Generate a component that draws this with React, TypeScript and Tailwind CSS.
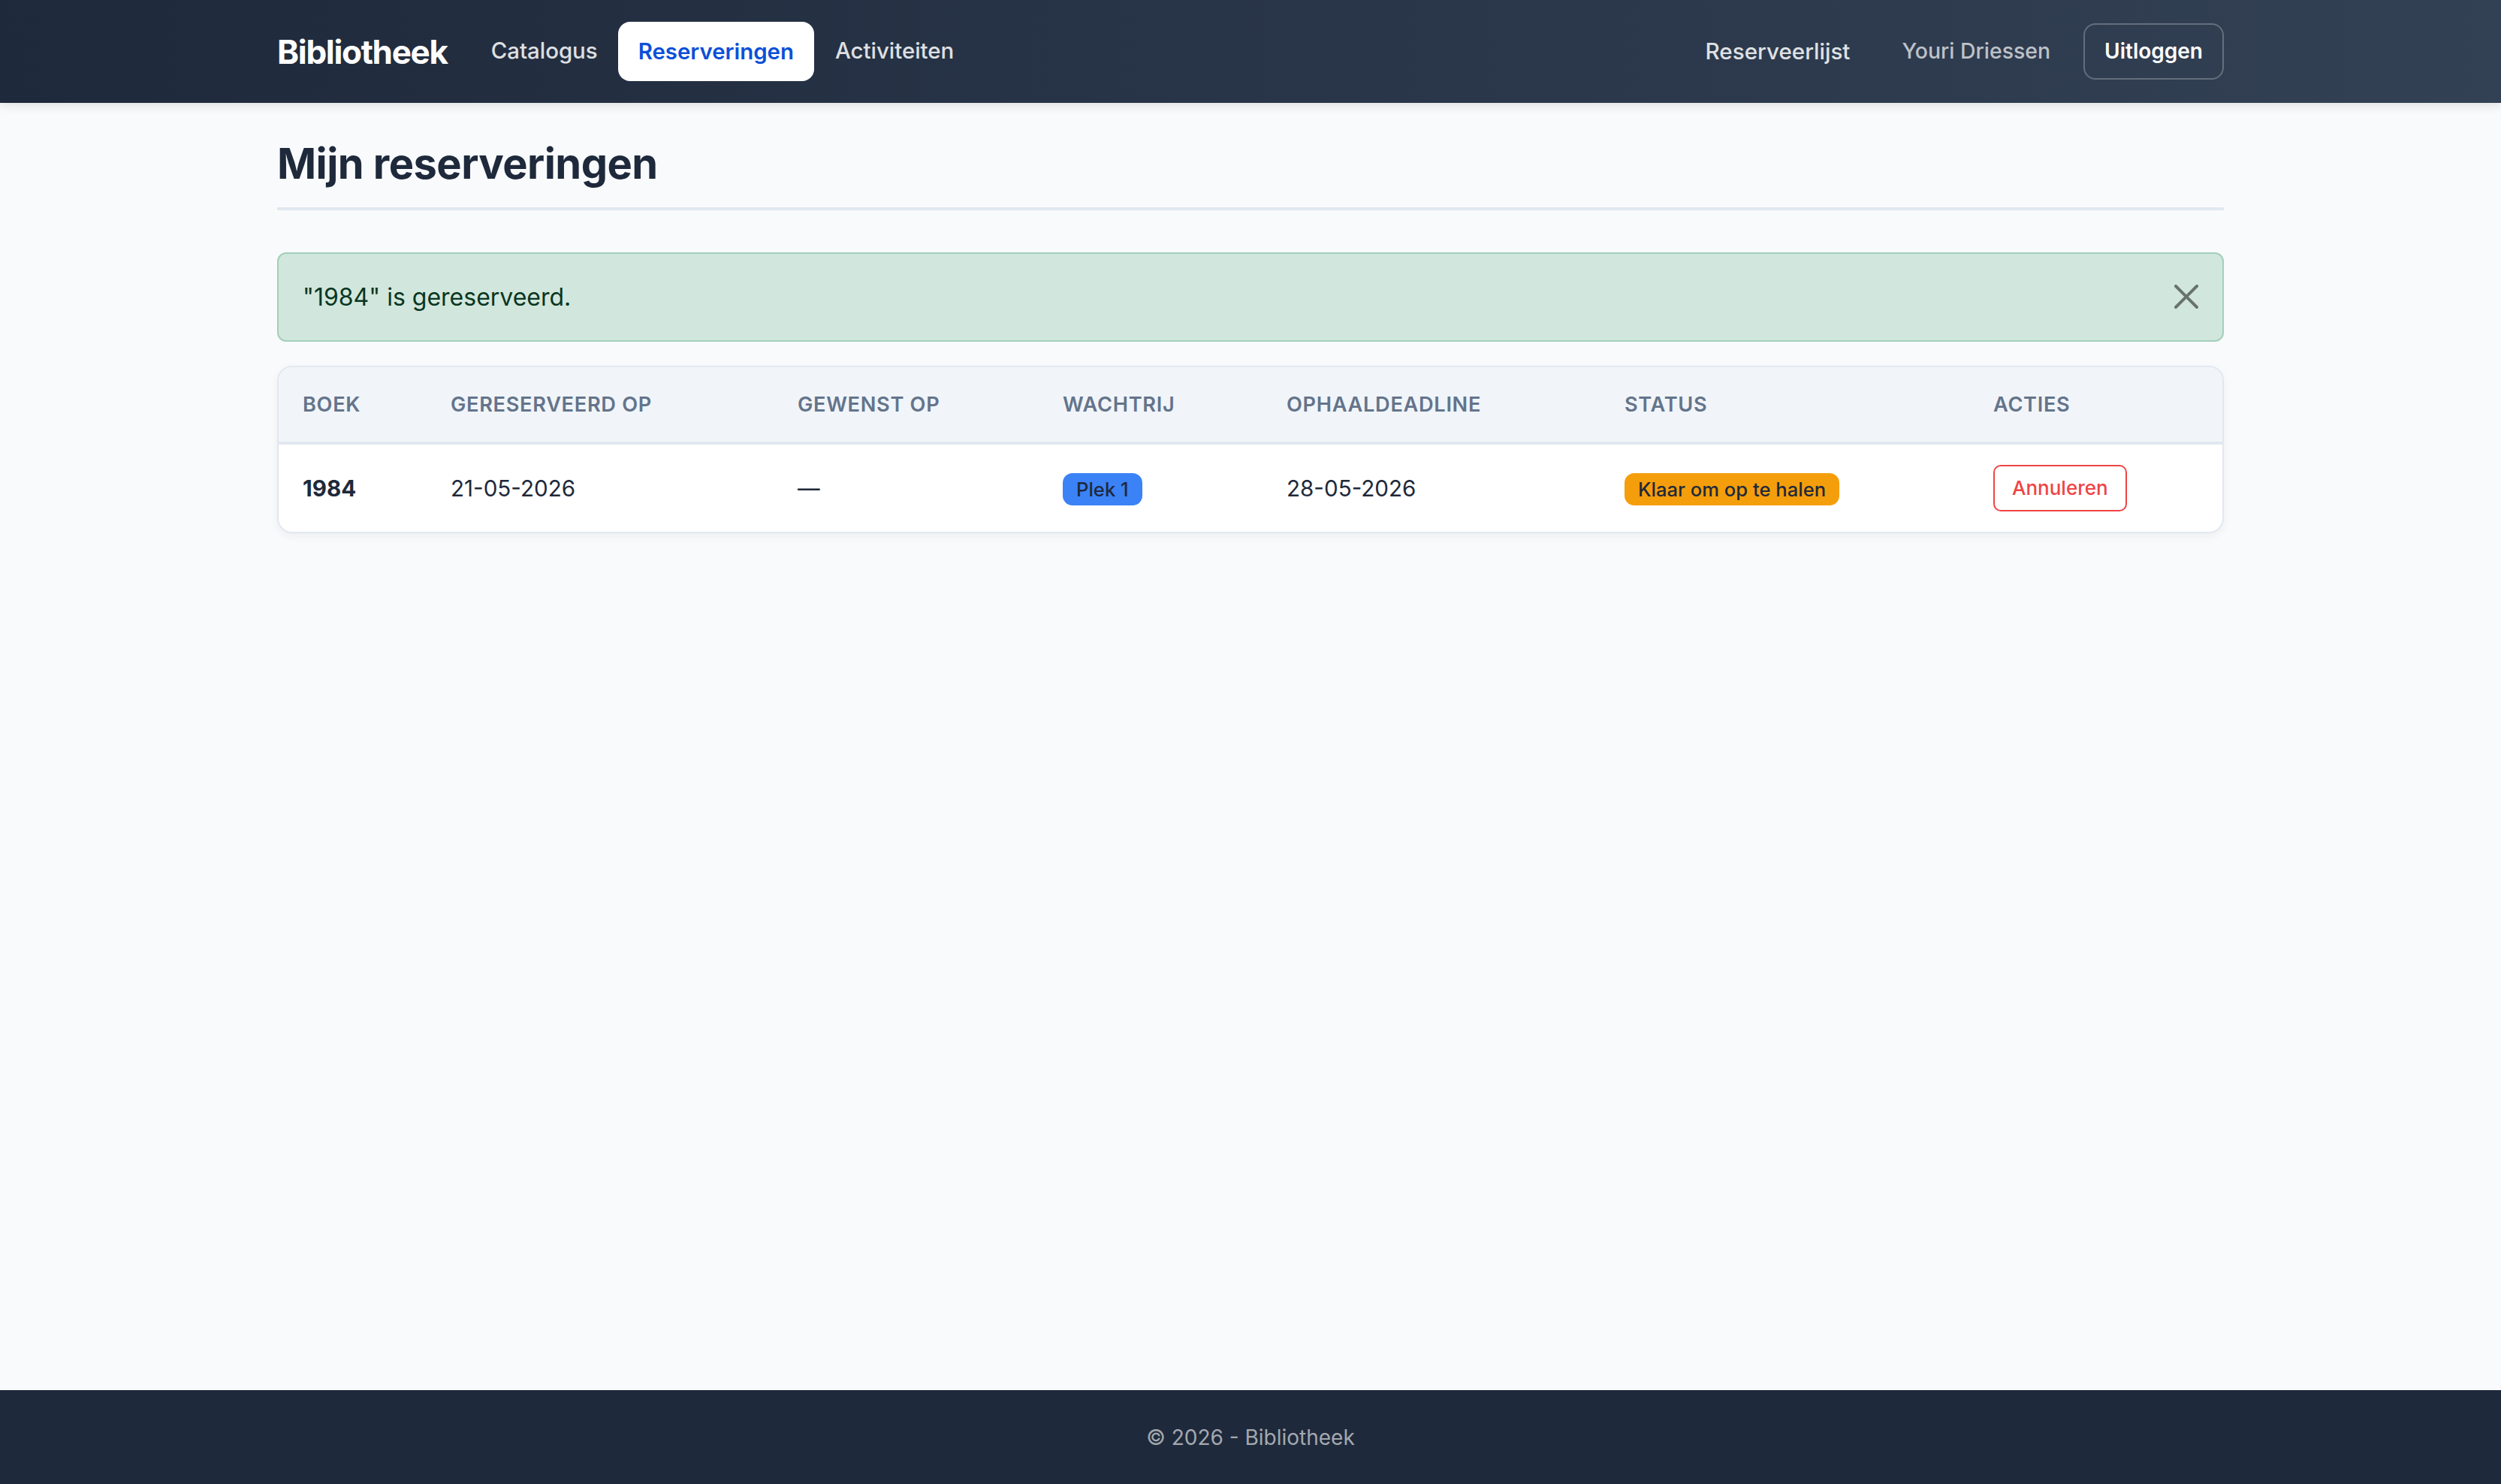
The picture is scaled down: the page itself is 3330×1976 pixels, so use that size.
import React from "react";

const cols = [
  "w-[197px]",
  "w-[462px]",
  "w-[353px]",
  "w-[298px]",
  "w-[450px]",
  "w-[491px]",
  "w-[337px]",
];
const heads = ["BOEK", "GERESERVEERD OP", "GEWENST OP", "WACHTRIJ", "OPHAALDEADLINE", "STATUS", "ACTIES"];

export default function App() {
  return (
    <div className="flex min-h-[1976px] flex-col bg-[#f8fafc] font-['Inter',sans-serif] text-[29.6px] text-[#1e293b]">
      <nav className="z-10 h-[137px] bg-gradient-to-r from-[#1e293b] to-[#334155] shadow-[0_4px_12px_rgba(0,0,0,0.1)]">
        <div className="mx-auto flex h-full w-[2592px] items-center justify-between">
          <div className="flex items-center">
            <span className="mr-[31px] text-[44px] font-bold tracking-[-1.32px] text-white">Bibliotheek</span>
            <ul className="flex items-center text-[29.4px] font-medium">
              <li className="px-[27px] py-[16px] text-white/85">Catalogus</li>
              <li className="mr-[1px] rounded-[16px] bg-white px-[27px] py-[16px] leading-[47px] font-semibold text-[#0b50d8]">Reserveringen</li>
              <li className="px-[27px] py-[16px] text-white/85">Activiteiten</li>
            </ul>
          </div>
          <div className="flex items-center text-[29.6px] font-medium">
            <span className="text-white/85">Reserveerlijst</span>
            <span className="ml-[69px] text-[28.4px] text-white/70">Youri Driessen</span>
            <span className="ml-[44px] rounded-[16px] border-[2px] border-white/25 px-[26px] py-[13px] text-[28px] leading-[45px] font-semibold text-white">Uitloggen</span>
          </div>
        </div>
      </nav>

      <main className="mx-auto w-[2592px] flex-1">
        <h1 className="mt-[48px] border-b-[4px] border-[#e2e8f0] pb-[24px] text-[56px] leading-[67px] font-bold tracking-[-0.56px] text-[#1e293b]">
          Mijn reserveringen
        </h1>

        <div className="mt-[56px] flex h-[119px] items-center justify-between rounded-[12px] border-[2px] border-[#a3cfbb] bg-[#d1e7dd] pr-[32px] pl-[32px] text-[32px] text-[#0a3622]">
          <span>"1984" is gereserveerd.</span>
          <svg width="32" height="32" viewBox="0 0 16 16" fill="#000" fillOpacity="0.5" className="mt-[-2px]">
            <path d="M.293.293a1 1 0 0 1 1.414 0L8 6.586 14.293.293a1 1 0 1 1 1.414 1.414L9.414 8l6.293 6.293a1 1 0 0 1-1.414 1.414L8 9.414l-6.293 6.293a1 1 0 0 1-1.414-1.414L6.586 8 .293 1.707a1 1 0 0 1 0-1.414z" />
          </svg>
        </div>

        <div className="mt-[32px] overflow-hidden rounded-[20px] border-[2px] border-[#e2e8f0] bg-white shadow-[0_4px_12px_rgba(0,0,0,0.05)]">
          <table className="w-full table-fixed border-collapse">
            <thead>
              <tr className="h-[101px] border-b-[4px] border-[#e2e8f0] bg-[#f1f5f9] text-left text-[27.2px] font-semibold tracking-[0.68px] text-[#64748b]">
                {heads.map((h, i) => (
                  <th key={h} className={`${cols[i]} pt-[1px] pl-[32px] font-semibold`}>{h}</th>
                ))}
              </tr>
            </thead>
            <tbody>
              <tr className="h-[118px]">
                <td className="pl-[32px] font-bold">1984</td>
                <td className="pl-[32px]">21-05-2026</td>
                <td className="pl-[32px]">—</td>
                <td className="pl-[32px]">
                  <span className="inline-block rounded-[13px] bg-[#3b82f6] px-[18px] py-[8.5px] align-middle text-[25.6px] leading-[26px] font-medium">Plek 1</span>
                </td>
                <td className="pl-[32px]">28-05-2026</td>
                <td className="pl-[32px]">
                  <span className="inline-block rounded-[13px] bg-[#f59e0b] px-[18px] py-[8.5px] align-middle text-[25.6px] leading-[26px] font-medium">Klaar om op te halen</span>
                </td>
                <td className="pl-[32px]">
                  <span className="inline-block rounded-[10px] border-[2px] border-[#ef4444] px-[23px] py-[8px] align-middle text-[26px] leading-[42px] font-medium text-[#ef4444]">Annuleren</span>
                </td>
              </tr>
            </tbody>
          </table>
        </div>
      </main>

      <footer className="flex h-[125px] items-center justify-center bg-[#1e293b] text-[28px] text-white/60">
        © 2026 - Bibliotheek
      </footer>
    </div>
  );
}
